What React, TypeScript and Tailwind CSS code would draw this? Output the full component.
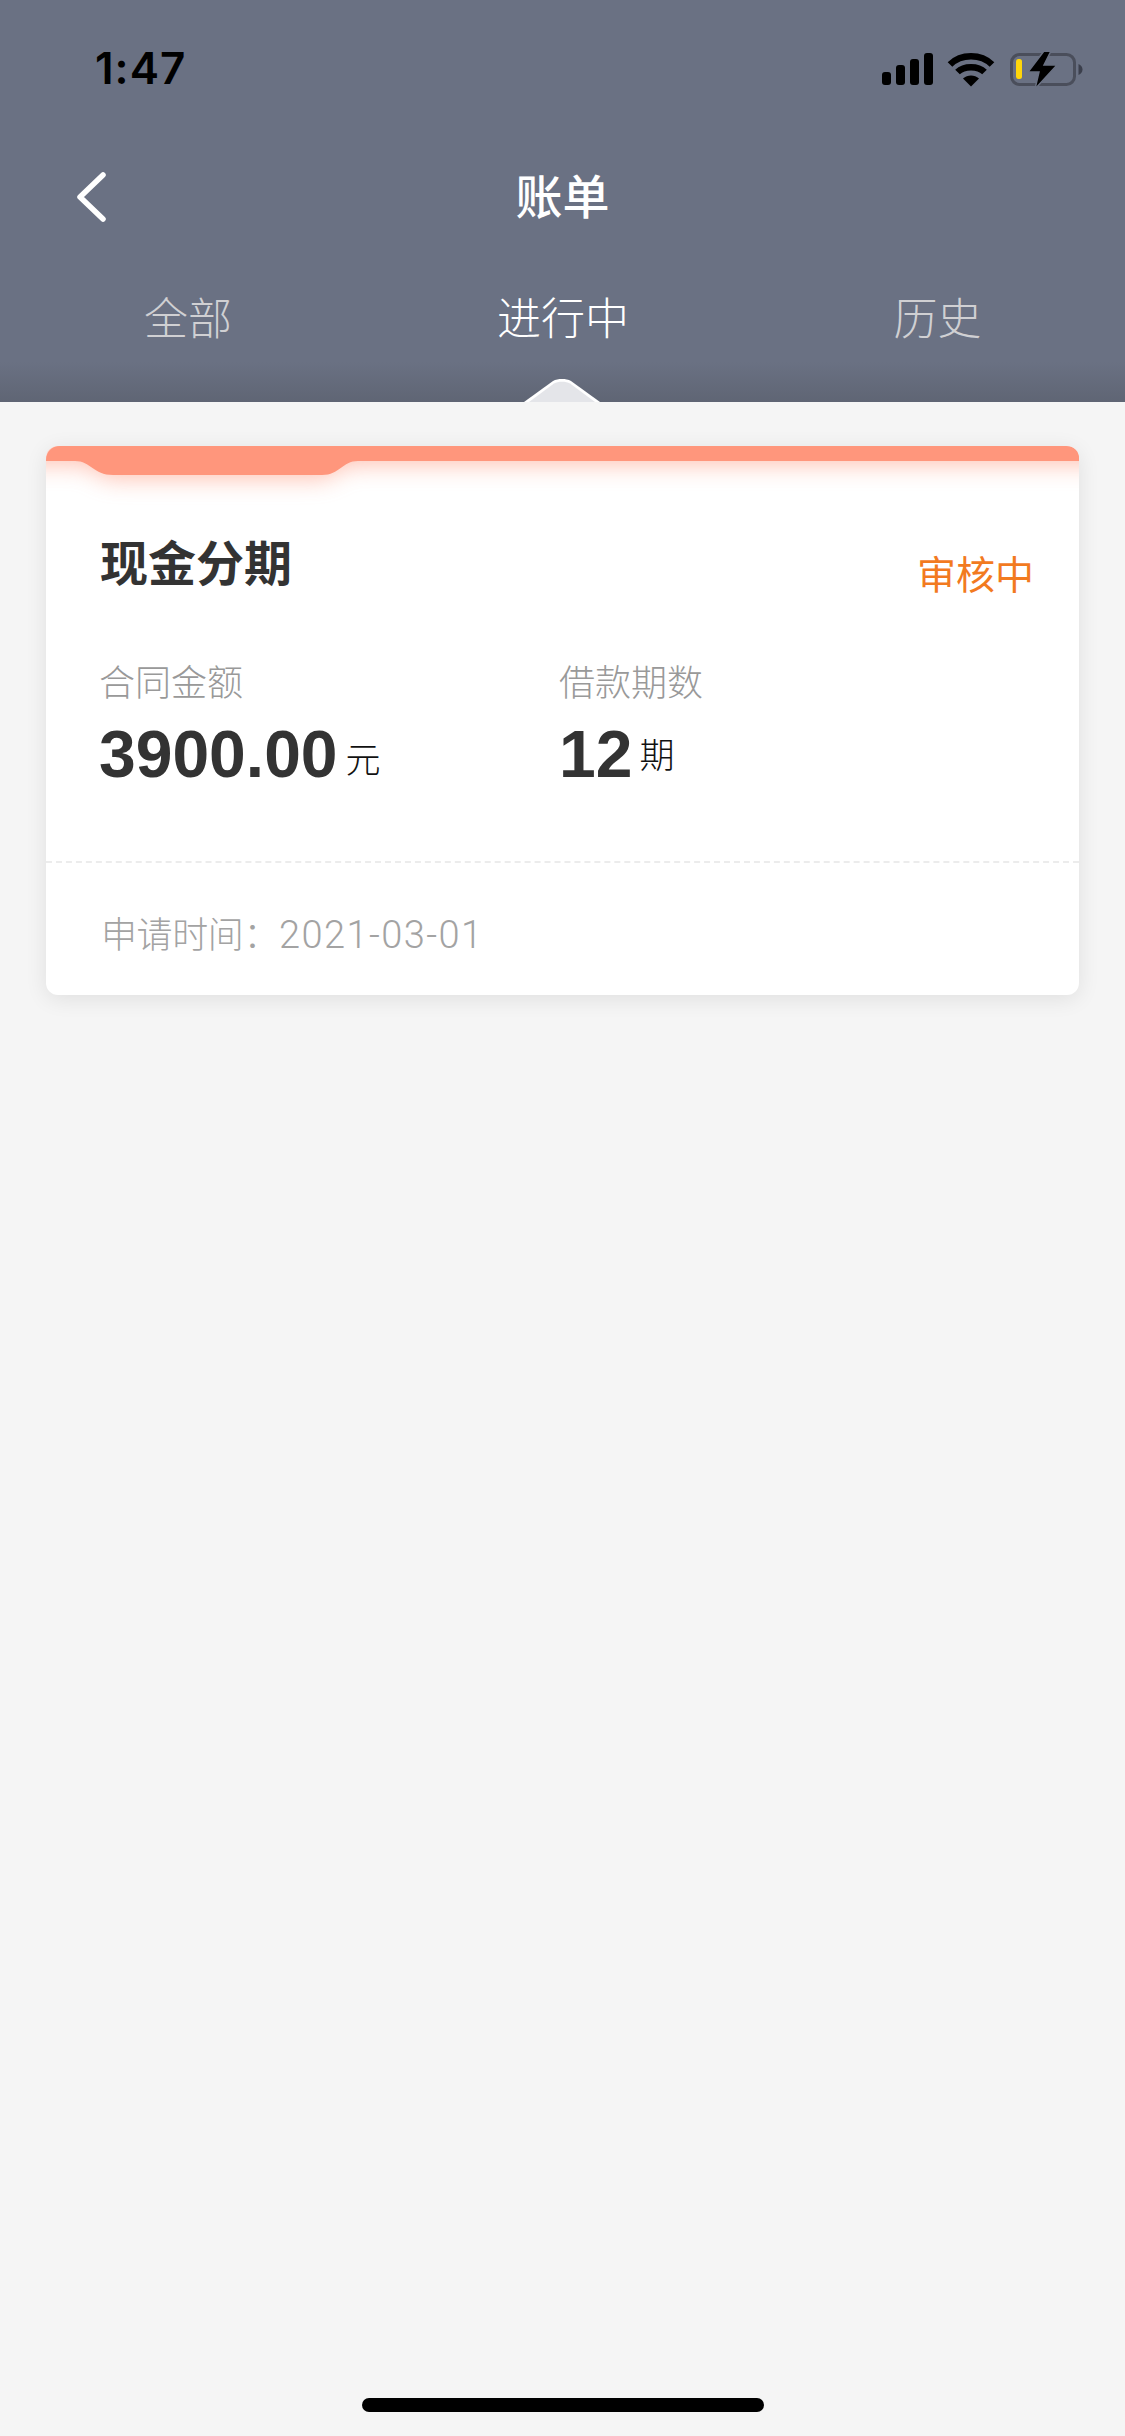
import React from 'react';

const cjk = "font-['Helvetica_Neue','Liberation_Sans','Noto_Sans_CJK_SC',sans-serif]";

const StatusIcons: React.FC = () => (
  <svg width="202" height="36" viewBox="0 0 202 36" className="block">
    {/* signal */}
    <rect x="0" y="20" width="9" height="13" rx="3" fill="#000" />
    <rect x="14" y="13" width="9" height="20" rx="3" fill="#000" />
    <rect x="28" y="7" width="9" height="26" rx="3" fill="#000" />
    <rect x="42" y="1" width="9" height="32" rx="3" fill="#000" />
    {/* wifi */}
    <path d="M68 12.5 C79 1.5 99 1.5 110 12.5" fill="none" stroke="#000" strokeWidth="6.5" />
    <path d="M75.5 20 C82 13.5 96 13.5 102.5 20" fill="none" stroke="#000" strokeWidth="6.5" />
    <path d="M81 26.5 C85.5 22.5 92.5 22.5 97 26.5 L89 34.5 Z" fill="#000" />
    {/* battery */}
    <rect x="129.5" y="2.5" width="63" height="30" rx="8" fill="none" stroke="#4a4e5b" strokeWidth="3" />
    <rect x="134" y="7" width="6" height="20" rx="2.5" fill="#ffd60a" />
    <path d="M196.5 12 C199 13 200.5 15 200.5 17.5 C200.5 20 199 22 196.5 23 Z" fill="#3b3f4c" />
    <path d="M162 -1 L146 20 L157 20 L153 37 L175 13 L162 13 L169 -1 Z" fill="#000" stroke="#6a7183" strokeWidth="1.5" />
  </svg>
);

const CardBand: React.FC = () => (
  <svg
    className="absolute left-0 top-0 block"
    width="1034"
    height="110"
    viewBox="0 0 1034 110"
  >
    <defs>
      <filter id="band-blur" filterUnits="userSpaceOnUse" x="-100" y="-60" width="1234" height="200">
        <feGaussianBlur stdDeviation="12" />
      </filter>
    </defs>
    <path
      d="M-80 -40 H1114 V18 H304 C294 18 288 32 274 32 H67 C53 32 47 18 37 18 H-80 Z"
      fill="#ff967c"
      opacity="0.62"
      filter="url(#band-blur)"
    />
    <path
      d="M0 15 V14 C0 6 6 0 14 0 H1020 C1028 0 1034 6 1034 14 V15 H312 C296 15 294 29 276 29 H67 C47 29 45 15 29 15 Z"
      fill="#ff967c"
    />
  </svg>
);

const Stat: React.FC<{ label: string; value: string; unit: string; className: string; unitClass: string }> = ({
  label,
  value,
  unit,
  className,
  unitClass,
}) => (
  <div className={className}>
    <div className="text-[36px] leading-[44px] font-light text-[#999999]">{label}</div>
    <div className="mt-[11px] flex items-end">
      <span className="text-[66px] leading-[74px] font-bold text-[#333333] font-['Liberation_Sans',sans-serif]">
        {value}
      </span>
      <span className={`text-[35px] leading-[40px] font-light text-[#111111] ${unitClass}`}>{unit}</span>
    </div>
  </div>
);

const App: React.FC = () => {
  return (
    <div className={`flex min-h-[2436px] w-[1125px] flex-col bg-[#f5f5f5] ${cjk}`}>
      {/* Header */}
      <header className="relative h-[402px] bg-[linear-gradient(to_bottom,#6a7183_0%,#6a7183_90%,#5f6574_100%)]">
        <div className="flex h-[136px] items-start justify-between pl-[95px] pr-[41px] pt-[44px]">
          <span className="text-[44px] leading-[48px] font-semibold tracking-[1px] text-black font-['Inter',sans-serif]">
            1:47
          </span>
          <div className="pt-[8px]">
            <StatusIcons />
          </div>
        </div>

        <div className="relative flex h-[124px] items-center justify-center">
          <svg
            className="absolute left-[74px] top-[35px]"
            width="34"
            height="52"
            viewBox="0 0 34 52"
            fill="none"
          >
            <path d="M29 4 L6 26 L29 48" stroke="#fff" strokeWidth="5.5" strokeLinecap="round" strokeLinejoin="round" />
          </svg>
          <h1 className="text-[47px] leading-[56px] font-medium text-white">账单</h1>
        </div>

        <nav className="mt-[25px] grid h-[70px] grid-cols-[376px_374px_375px] items-center text-center text-[44px] leading-[56px] font-light">
          <span className="text-[#d0d0d3]">全部</span>
          <span className="text-white">进行中</span>
          <span className="text-[#d0d0d3]">历史</span>
        </nav>

        {/* active tab pointer */}
        <svg className="absolute bottom-0 left-[524px]" width="76" height="23" viewBox="0 0 76 23">
          <path d="M0 23 L29 2 C34 -0.6 42 -0.6 47 2 L76 23 Z" fill="#fff" />
          <path d="M5 23 L30 4.5 C34 2 42 2 46 4.5 L71 23 Z" fill="#e4e5e9" />
        </svg>
      </header>

      {/* Card */}
      <main className="px-[46px] pt-[44px]">
        <section className="relative h-[549px] overflow-hidden rounded-[12px] bg-white shadow-[0_4px_22px_rgba(0,0,0,0.09)]">
          <CardBand />

          <div className="relative flex items-start justify-between pl-[54px] pr-[45px] pt-[89px]">
            <h2 className="text-[48px] leading-[60px] font-bold text-[#333333]">现金分期</h2>
            <span className="mt-[16px] text-[39px] leading-[50px] text-[#f27a1f]">审核中</span>
          </div>

          <div className="mt-[61px] flex pl-[53px]">
            <Stat label="合同金额" value="3900.00" unit="元" className="w-[460px]" unitClass="mb-[10px] ml-[8px]" />
            <Stat label="借款期数" value="12" unit="期" className="" unitClass="mb-[15px] ml-[7px]" />
          </div>

          <div className="mt-[70px] border-t-2 border-dashed border-[#ececec]" />

          <div className="flex items-baseline pl-[55px] pt-[47px] text-[36px] leading-[50px] font-light text-[#a3a3a3]">
            <span className="tracking-[-0.4px]">申请时间：</span>
            <span className="text-[38px] tracking-[1.4px] font-['Roboto',sans-serif]">2021-03-01</span>
          </div>
        </section>
      </main>

      {/* Home indicator */}
      <div className="mt-auto flex justify-center pb-[24px]">
        <div className="h-[14px] w-[402px] rounded-full bg-black" />
      </div>
    </div>
  );
};

export default App;
